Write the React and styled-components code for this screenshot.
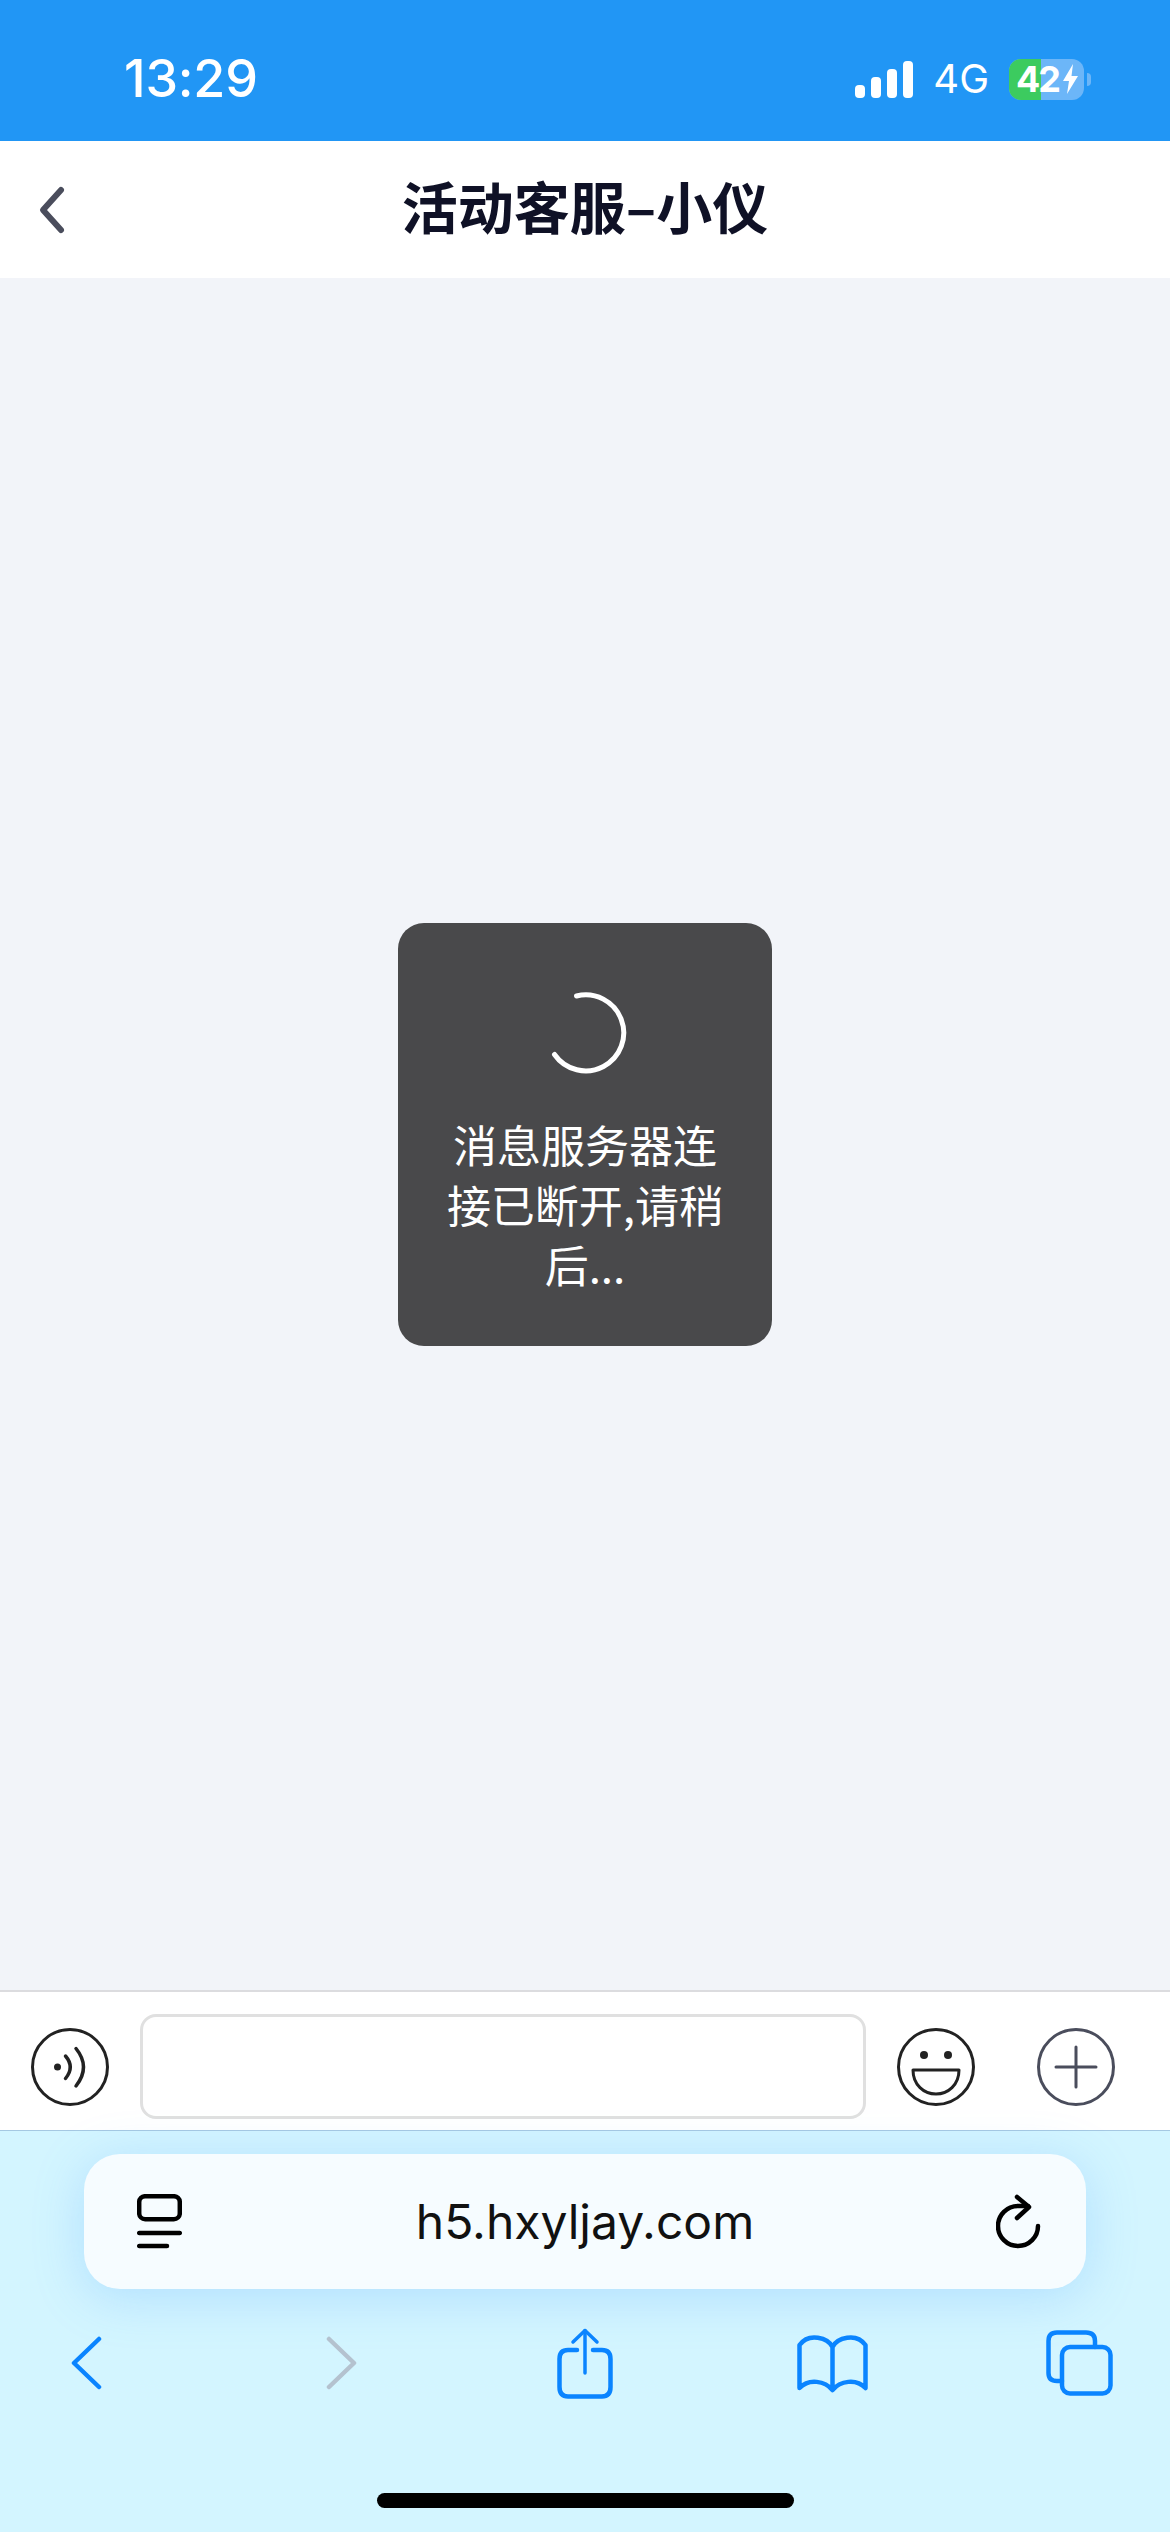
import React from 'react';
import styled, { createGlobalStyle } from 'styled-components';

const GlobalStyle = createGlobalStyle`
  html, body {
    margin: 0;
    padding: 0;
    background: #d3f5ff;
  }
  * {
    box-sizing: border-box;
  }
`;

const Page = styled.div`
  width: 1170px;
  height: 2532px;
  display: flex;
  flex-direction: column;
  overflow: hidden;
  font-family: Inter, "Noto Sans CJK SC", sans-serif;
`;

const StatusBar = styled.div`
  height: 141px;
  flex: none;
  background: #2196f5;
  color: #fff;
  display: flex;
  align-items: center;
  padding: 17px 79px 0 124px;
`;

const Time = styled.div`
  font-size: 52px;
  font-weight: 500;
  line-height: 60px;
  letter-spacing: -0.2px;
  margin-right: auto;
`;

const Signal = styled.div`
  display: flex;
  align-items: flex-end;
  gap: 6px;
  height: 37px;
`;

const SignalBar = styled.span`
  display: block;
  width: 10px;
  height: ${(p) => p.$h}px;
  background: #fff;
  border-radius: 4px;
`;

const Network = styled.div`
  font-size: 40px;
  line-height: 40px;
  margin-left: 20px;
  margin-right: 20px;
`;

const Battery = styled.div`
  position: relative;
  width: 75px;
  height: 41px;
  border-radius: 12px;
  background: #6cb6f8;
  display: flex;
  align-items: center;
  padding-left: 7px;
  font-size: 36px;
  font-weight: 700;
  line-height: 41px;
  letter-spacing: -2px;
`;

const BatteryFill = styled.span`
  position: absolute;
  left: 0;
  top: 0;
  bottom: 0;
  width: 32px;
  background: #3ccb5f;
  border-radius: 12px 0 0 12px;
`;

const BatteryText = styled.span`
  position: relative;
`;

const BatteryBolt = styled.svg`
  position: relative;
  width: 15px;
  height: 30px;
  margin-left: 4px;
  flex: none;
`;

const BatteryNub = styled.span`
  width: 4px;
  height: 13px;
  margin-left: 3px;
  background: #6cb6f8;
  border-radius: 0 4px 4px 0;
`;

const NavBar = styled.div`
  height: 137px;
  flex: none;
  background: #fff;
  display: flex;
  align-items: center;
  justify-content: center;
  position: relative;
  padding-bottom: 10px;
`;

const BackButton = styled.svg`
  position: absolute;
  left: 37px;
  top: 44px;
  width: 32px;
  height: 50px;
`;

const Title = styled.h1`
  margin: 0;
  font-family: "Noto Sans CJK SC", sans-serif;
  font-size: 56px;
  font-weight: 700;
  line-height: 70px;
  color: #0f1126;
`;

const ChatArea = styled.div`
  flex: 1;
  background: #f2f4f9;
  display: flex;
  align-items: center;
  justify-content: center;
`;

const Toast = styled.div`
  width: 374px;
  height: 423px;
  background: #49494b;
  border-radius: 26px;
  color: #fff;
  display: flex;
  flex-direction: column;
  align-items: center;
  padding-top: 67px;
`;

const Spinner = styled.svg`
  width: 86px;
  height: 86px;
  flex: none;
`;

const ToastText = styled.div`
  width: 290px;
  margin-top: 38px;
  font-family: "Noto Sans CJK SC", sans-serif;
  font-size: 44px;
  font-weight: 400;
  line-height: 60px;
  text-align: center;
`;

const InputBar = styled.div`
  height: 141px;
  flex: none;
  background: #fff;
  border-top: 2px solid #dcdcdf;
  border-bottom: 1px solid #a5c8e2;
  display: flex;
  align-items: center;
  padding: 22px 0 11px 31px;
`;

const RoundIcon = styled.svg`
  width: 78px;
  height: 78px;
  flex: none;
  margin-left: ${(p) => p.$gap || 0}px;
`;

const MessageInput = styled.div`
  width: 726px;
  height: 105px;
  margin-left: 31px;
  background: #fff;
  border: 3px solid #e0e0e0;
  border-radius: 16px;
`;

const BrowserChrome = styled.div`
  height: 401px;
  flex: none;
  background: #d3f5ff;
  display: flex;
  flex-direction: column;
`;

const AddressBar = styled.div`
  height: 135px;
  margin: 23px 84px 0;
  background: #f6fcff;
  border-radius: 36px;
  box-shadow: 0 8px 50px rgba(90, 170, 255, 0.28);
  display: flex;
  align-items: center;
  justify-content: space-between;
  padding: 0 44px 0 53px;
`;

const TabIcon = styled.svg`
  width: 45px;
  height: 56px;
`;

const Url = styled.div`
  font-size: 48px;
  line-height: 60px;
  color: #111;
  margin-right: 8px;
`;

const ReloadIcon = styled.svg`
  width: 46px;
  height: 58px;
`;

const ToolBar = styled.div`
  height: 148px;
  display: flex;
  align-items: center;
  padding-left: 71px;
`;

const ToolIcon = styled.svg`
  width: ${(p) => p.$w}px;
  height: ${(p) => p.$h}px;
  margin-left: ${(p) => p.$gap || 0}px;
  fill: none;
  stroke: ${(p) => p.$color || '#0a84ff'};
  stroke-width: 4.5;
  stroke-linecap: round;
  stroke-linejoin: round;
`;

const HomeIndicator = styled.div`
  width: 417px;
  height: 15px;
  margin: 56px 0 0 377px;
  background: #000;
  border-radius: 8px;
`;

export default function App() {
  return (
    <Page>
      <GlobalStyle />
      <StatusBar>
        <Time>13:29</Time>
        <Signal>
          <SignalBar $h={13} />
          <SignalBar $h={21} />
          <SignalBar $h={29} />
          <SignalBar $h={37} />
        </Signal>
        <Network>4G</Network>
        <Battery>
          <BatteryFill />
          <BatteryText>42</BatteryText>
          <BatteryBolt viewBox="0 0 15 30">
            <path d="M10 0 L0 17 H6 L4 30 L15 12 H8.5 Z" fill="#fff" />
          </BatteryBolt>
        </Battery>
        <BatteryNub />
      </StatusBar>

      <NavBar>
        <BackButton viewBox="0 0 32 50">
          <path d="M24 5 L6 25 L24 45" fill="none" stroke="#4a4d5c" strokeWidth="6" strokeLinecap="round" strokeLinejoin="round" />
        </BackButton>
        <Title>活动客服–小仪</Title>
      </NavBar>

      <ChatArea>
        <Toast>
          <Spinner viewBox="0 0 86 86">
            <path d="M34.5 6 A38 38 0 1 1 12.5 64.5" fill="none" stroke="#fff" strokeWidth="5" strokeLinecap="round" />
          </Spinner>
          <ToastText>消息服务器连接已断开,请稍后...</ToastText>
        </Toast>
      </ChatArea>

      <InputBar>
        <RoundIcon viewBox="0 0 78 78" fill="none" stroke="#222" strokeWidth="3" strokeLinecap="round">
          <circle cx="39" cy="39" r="37.5" />
          <circle cx="26.5" cy="39" r="3.5" fill="#222" stroke="none" />
          <path d="M34.5 28 Q44 39 34.5 50.5" strokeWidth="3.5" />
          <path d="M45 20.5 Q60 39 45 58" strokeWidth="3.5" />
        </RoundIcon>
        <MessageInput />
        <RoundIcon $gap={31} viewBox="0 0 78 78" fill="none" stroke="#222" strokeWidth="3">
          <circle cx="39" cy="39" r="37.5" />
          <circle cx="27" cy="27" r="4" fill="#222" stroke="none" />
          <circle cx="51" cy="27" r="4" fill="#222" stroke="none" />
          <path d="M16 42 H62 C62 57 51 66 39 66 C27 66 16 57 16 42 Z" strokeLinejoin="round" />
        </RoundIcon>
        <RoundIcon $gap={62} viewBox="0 0 78 78" fill="none" stroke="#4a4d5c" strokeWidth="3" strokeLinecap="round">
          <circle cx="39" cy="39" r="37.5" />
          <path d="M19 39 H59 M39 19 V59" />
        </RoundIcon>
      </InputBar>

      <BrowserChrome>
        <AddressBar>
          <TabIcon viewBox="0 0 45 56" fill="none" stroke="#000" strokeWidth="4.5" strokeLinecap="round">
            <rect x="2.2" y="2.2" width="40.6" height="23" rx="6" />
            <path d="M2.2 39 H42.8 M2.2 52 H30" />
          </TabIcon>
          <Url>h5.hxyljay.com</Url>
          <ReloadIcon viewBox="0 0 46 58" fill="none" stroke="#000" strokeWidth="4.5" strokeLinecap="round" strokeLinejoin="round">
            <path d="M42 33 A20 20 0 1 1 22 13 H32" />
            <path d="M21 4 L33 14 L21 25" />
          </ReloadIcon>
        </AddressBar>

        <ToolBar>
          <ToolIcon $w={31} $h={54} viewBox="0 0 31 54">
            <path d="M28 3 L3 27 L28 51" />
          </ToolIcon>
          <ToolIcon $w={31} $h={54} $gap={224} $color="#b4c2cf" viewBox="0 0 31 54">
            <path d="M3 3 L28 27 L3 51" />
          </ToolIcon>
          <ToolIcon $w={56} $h={71} $gap={200} viewBox="0 0 56 71">
            <path d="M20 22 H11 Q2.5 22 2.5 31 V59 Q2.5 68.5 11 68.5 H45 Q53.5 68.5 53.5 59 V31 Q53.5 22 45 22 H36" />
            <path d="M28 2.5 V45" strokeWidth="3.5" />
            <path d="M16 14 L28 2.5 L40 14" strokeWidth="3.5" />
          </ToolIcon>
          <ToolIcon $w={71} $h={60} $gap={184} viewBox="0 0 71 60">
            <path d="M35.5 57 V14 C31 5 12 -1 2.5 12 V55 C12 45 28 48 35.5 57 C43 48 59 45 68.5 55 V12 C59 -1 40 5 35.5 14" />
          </ToolIcon>
          <ToolIcon $w={67} $h={66} $gap={178} viewBox="0 0 67 66">
            <path d="M16 51 H11 Q2.5 51 2.5 43 V11 Q2.5 2.5 11 2.5 H40 Q49 2.5 49 11 V17" />
            <rect x="16" y="17" width="48.5" height="46.5" rx="8" />
          </ToolIcon>
        </ToolBar>

        <HomeIndicator />
      </BrowserChrome>
    </Page>
  );
}
